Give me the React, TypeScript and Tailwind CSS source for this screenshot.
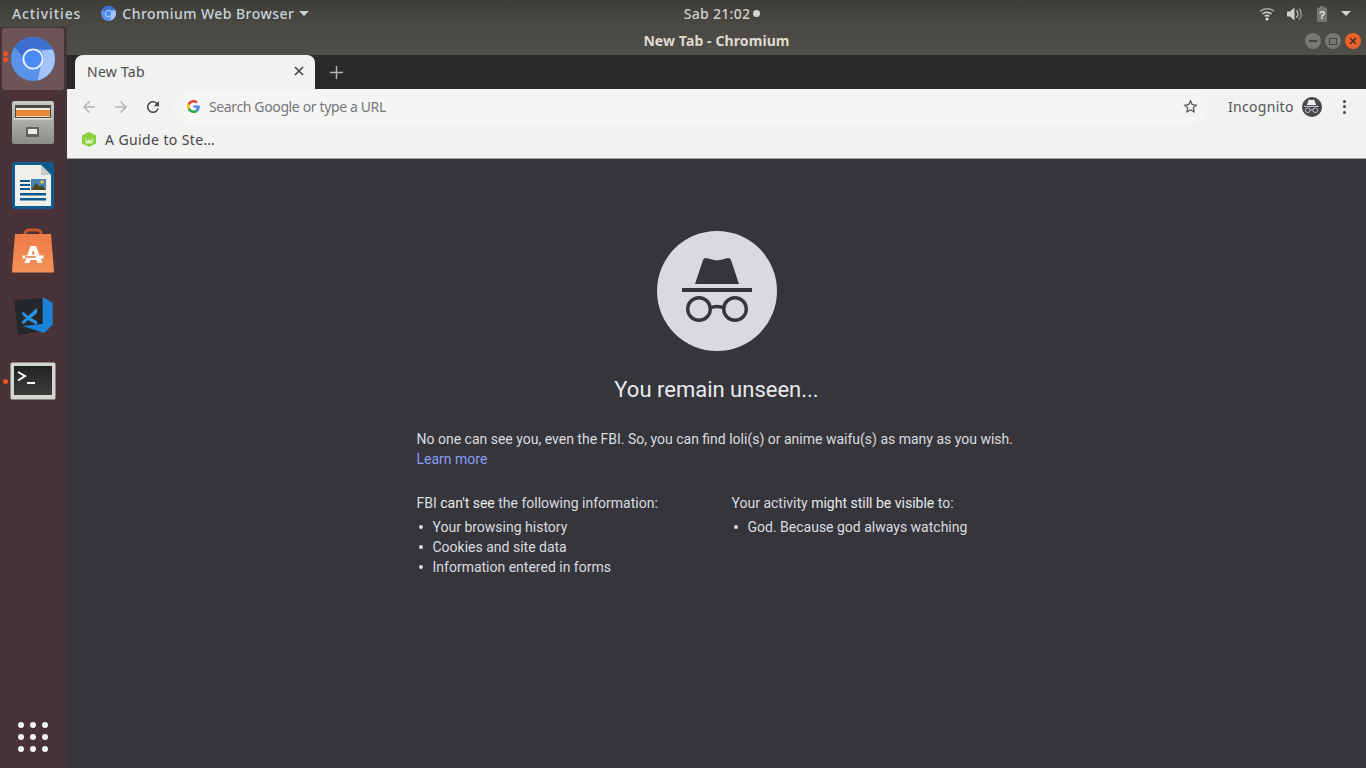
import React from "react";

const ChromiumLogo = ({ s }: { s: number }) => (
  <svg width={s} height={s} viewBox="0 0 48 48">
    <circle cx="24" cy="24" r="24" fill="#5a92ea" />
    <path d="M4 11A24 24 0 0 1 45.500 13.500L24 13A11 11 0 0 0 13 22Z" fill="#3c6fd0" />
    <path d="M45.500 13.500A24 24 0 0 1 29 47.500L33 30A11 11 0 0 0 33 15Z" fill="#a3c4fa" />
    <circle cx="24" cy="24" r="10.500" fill="#4a8cf2" stroke="#f2f6fd" strokeWidth="2" />
  </svg>
);

const SpyIcon = ({ s, c }: { s: number; c: string }) => (
  <svg width={s} height={s} viewBox="0 0 72 72" fill="none">
    <path d="M14 29 L22 5 Q23 2.500 26 3.200 L32 4.800 Q36 5.800 40 4.800 L46 3.200 Q49 2.500 50 5 L58 29 Z" fill={c} />
    <rect x="1" y="33" width="70" height="4" fill={c} />
    <circle cx="18" cy="54" r="11.300" stroke={c} strokeWidth="3.400" />
    <circle cx="54" cy="54" r="11.300" stroke={c} strokeWidth="3.400" />
    <path d="M29 53 Q36 50 43 53" stroke={c} strokeWidth="3.400" />
  </svg>
);

const Files = () => (
  <svg width="44" height="46" viewBox="0 0 44 46">
    <defs>
      <linearGradient id="fg" x1="0" y1="0" x2="0" y2="1">
        <stop offset="0" stopColor="#c9c9c5" />
        <stop offset="1" stopColor="#8c8c88" />
      </linearGradient>
    </defs>
    <rect x="1" y="2" width="42" height="43" rx="2.500" fill="url(#fg)" />
    <rect x="4" y="6" width="36" height="13" fill="#4c4844" />
    <rect x="5" y="9" width="34" height="2" fill="#f4efe2" />
    <rect x="5" y="11" width="34" height="6" fill="#e8873a" />
    <rect x="5" y="17" width="34" height="1" fill="#f4d9a8" />
    <rect x="3" y="19" width="38" height="1.500" fill="#e4e4e0" />
    <rect x="15" y="28" width="13" height="10" rx="1" fill="#5f5f5c" />
    <rect x="17" y="30" width="9" height="5" fill="#ecece8" />
  </svg>
);

const Writer = () => (
  <svg width="42" height="48" viewBox="0 0 42 48">
    <path d="M3 0h36a3 3 0 0 1 3 3v41a3 3 0 0 1-3 3H3a3 3 0 0 1-3-3V3a3 3 0 0 1 3-3z" fill="#0d5b8f" />
    <path d="M3 3h26l10 10v31H3z" fill="#efefeb" />
    <path d="M29 3v10h10z" fill="#c9c9c5" />
    <rect x="8" y="18" width="10" height="2" fill="#0f5a8c" />
    <rect x="8" y="22" width="10" height="2" fill="#0f5a8c" />
    <rect x="8" y="26" width="10" height="2" fill="#0f5a8c" />
    <rect x="8" y="31" width="26" height="2.500" fill="#0f5a8c" />
    <rect x="8" y="36" width="26" height="2.500" fill="#0f5a8c" />
    <rect x="19" y="17" width="15" height="11" fill="#4a86b4" />
    <path d="M19 28l5-7 4 4 2-2 4 5z" fill="#4c4526" />
    <circle cx="30" cy="20" r="1.800" fill="#f0c040" />
  </svg>
);

const Store = () => (
  <svg width="42" height="45" viewBox="0 0 42 45">
    <defs>
      <linearGradient id="sg" x1="0" y1="0" x2="0" y2="1">
        <stop offset="0" stopColor="#ee7c45" />
        <stop offset="1" stopColor="#f59058" />
      </linearGradient>
    </defs>
    <path d="M13 12V6a4 4 0 0 1 4-4h8a4 4 0 0 1 4 4v6" fill="none" stroke="#c9552a" strokeWidth="3" />
    <path d="M3 6h36l3 37a1.500 1.500 0 0 1-1.500 1.500H1.500A1.500 1.500 0 0 1 0 43z" fill="url(#sg)" />
    <path d="M18.500 18h5.500l6.500 17h-5l-1-3h-6l-1 3h-5zM21.200 22l-1.700 4.500h3.400z" fill="#fff" />
    <rect x="10.500" y="27.500" width="21" height="3" fill="#fff" />
    <rect x="13" y="28.300" width="11" height="1.400" fill="#e0703c" />
  </svg>
);

const VSCode = () => (
  <svg width="39" height="42" viewBox="0 0 39 42">
    <path d="M0 3 L29 1 L31 34 L4 38 Z" fill="#24282d" />
    <path d="M28.700 0 L38.700 6 L38.700 27.700 L30 36 L8.700 29 L28.700 27 Z" fill="#1b84d8" />
    <path d="M23 11 L14 19 L9.500 15 L7.500 16.500 L12 21 L7.500 25 L9.500 27 L14 23 L23 28 Z M23 16 V24 L17 21 Z" fill="#2a93e6" fillRule="evenodd" />
  </svg>
);

const Terminal = () => (
  <svg width="46" height="38" viewBox="0 0 46 38">
    <defs>
      <linearGradient id="tg" x1="0" y1="0" x2="0" y2="1">
        <stop offset="0" stopColor="#222" />
        <stop offset="1" stopColor="#3c3c3c" />
      </linearGradient>
    </defs>
    <rect x="0.500" y="0.500" width="45" height="37" rx="1.500" fill="#d4d4d0" />
    <rect x="4" y="4" width="38" height="29" fill="url(#tg)" />
    <path d="M8 10l7 4-7 4.500" fill="none" stroke="#fff" strokeWidth="2" />
    <rect x="17" y="20" width="8" height="2" fill="#fff" />
  </svg>
);

const GoogleG = () => (
  <svg width="13" height="13" viewBox="0 0 48 48">
    <path fill="#EA4335" d="M24 9.500c3.500 0 6.700 1.300 9.100 3.500l6.800-6.800C35.800 2.400 30.300 0 24 0 14.600 0 6.500 5.400 2.600 13.200l7.900 6.100C12.400 13.700 17.700 9.500 24 9.500z" />
    <path fill="#4285F4" d="M47 24.500c0-1.600-.2-3.100-.4-4.500H24v9h13c-.6 3-2.200 5.500-4.700 7.200l7.600 5.900C44.300 37.900 47 31.800 47 24.500z" />
    <path fill="#FBBC05" d="M10.500 28.700C10 27.200 9.700 25.600 9.700 24s.3-3.200.8-4.700l-7.900-6.100C.9 16.500 0 20.100 0 24s.9 7.500 2.600 10.800z" />
    <path fill="#34A853" d="M24 48c6.500 0 11.900-2.100 15.900-5.900l-7.600-5.900c-2.200 1.500-5 2.300-8.300 2.300-6.300 0-11.600-4.200-13.500-9.900l-7.900 6.100C6.500 42.600 14.600 48 24 48z" />
  </svg>
);

const Nav = ({ d, c }: { d: string; c: string }) => (
  <svg width="18" height="18" viewBox="0 0 24 24" fill={c}>
    <path d={d} />
  </svg>
);

const dots = Array.from({ length: 9 });

const ubuntu = "font-['Noto_Sans','Liberation_Sans',sans-serif]";

export default function App() {
  return (
    <div className="h-screen w-[1366px] overflow-hidden flex flex-col bg-[#36353b] font-['Roboto',sans-serif]">
      {/* top panel */}
      <div className={`h-[27px] shrink-0 bg-gradient-to-b from-[#3e3d38] to-[#4a4943] grid grid-cols-[1fr_auto_1fr] items-center text-[14px] font-medium text-[#c9d3da] ${ubuntu}`}>
        <div className="flex items-center">
          <span className="ml-3 tracking-[0.9px]">Activities</span>
          <span className="ml-[20px]"><ChromiumLogo s={15} /></span>
          <span className="ml-[6px] tracking-[0.45px]">Chromium Web Browser</span>
          <span className="ml-[5px] w-0 h-0 border-x-[5px] border-x-transparent border-t-[5px] border-t-[#c9d3da]" />
        </div>
        <div className="ml-[78px] flex items-center gap-[3px] text-[#d0d0cc]">
          <span className="tracking-[0.3px]">Sab 21:02</span>
          <span className="w-[7px] h-[7px] rounded-full bg-[#d5d5d0]" />
        </div>
        <div className="flex items-center justify-end text-[#c4c4bf]">
          <svg width="16" height="14" viewBox="0 0 16 14" className="mr-[12px]" fill="none" stroke="#d0d0cc" strokeWidth="1.500">
            <path d="M1 4.500a10 10 0 0 1 14 0" opacity="0.7" />
            <path d="M3.500 7a6.500 6.500 0 0 1 9 0" />
            <path d="M5.800 9.400a3.200 3.200 0 0 1 4.400 0" />
            <circle cx="8" cy="12" r="1.500" fill="#e0e0dc" stroke="none" />
          </svg>
          <svg width="16" height="14" viewBox="0 0 16 14" className="mr-[13px]">
            <path d="M0 4.500h3l4.500-4v13l-4.500-4H0z" fill="#d0d0cc" />
            <path d="M9.500 3.500a5 5 0 0 1 0 7" fill="none" stroke="#d0d0cc" strokeWidth="1.300" />
            <path d="M12 1.500a8 8 0 0 1 0 11" fill="none" stroke="#9a9a95" strokeWidth="1.300" />
          </svg>
          <svg width="12" height="16" viewBox="0 0 12 16" className="mr-[13px]">
            <path d="M4 0h4v1.500h3V16H1V1.500h3z" fill="#777772" />
            <text x="6" y="13" textAnchor="middle" fontSize="11" fontWeight="700" fill="#e4e4e0" fontFamily="Liberation Sans, sans-serif">?</text>
          </svg>
          <span className="mr-[15px] w-0 h-0 border-x-[5px] border-x-transparent border-t-[5px] border-t-[#d0d0cc]" />
        </div>
      </div>

      <div className="flex-1 min-h-0 flex">
        {/* dock */}
        <div className="w-[67px] shrink-0 bg-[#4a3338] border-r border-[#3d3a3e] flex flex-col items-center relative">
          <div className="absolute left-[3px] top-[24px] flex flex-col gap-[1px]">
            <span className="w-[5px] h-[5px] rounded-full bg-[#e9541f]" />
            <span className="w-[5px] h-[5px] rounded-full bg-[#e9541f]" />
          </div>
          <div className="mt-[1px] w-[62px] h-[62px] rounded-[3px] bg-[#6d5458] flex items-center justify-center">
            <ChromiumLogo s={44} />
          </div>
          <div className="mt-[7px] h-[50px] flex items-center justify-center"><Files /></div>
          <div className="mt-[14px] h-[50px] flex items-center justify-center"><Writer /></div>
          <div className="mt-[14px] h-[50px] flex items-center justify-center"><Store /></div>
          <div className="mt-[18px] h-[50px] flex items-center justify-center"><VSCode /></div>
          <div className="mt-[13px] h-[50px] flex items-center justify-center relative w-full">
            <span className="absolute left-[3px] top-[23px] w-[5px] h-[5px] rounded-full bg-[#e9541f]" />
            <Terminal />
          </div>
          <div className="mt-auto mb-[16px] grid grid-cols-3 gap-x-[6px] gap-y-[6px]">
            {dots.map((_, i) => (
              <span key={i} className="w-[6px] h-[6px] rounded-full bg-[#f4f4f2]" />
            ))}
          </div>
        </div>

        {/* window */}
        <div className="flex-1 min-w-0 flex flex-col">
          <div className={`h-[28px] shrink-0 pb-[2px] bg-gradient-to-b from-[#4a4943] to-[#4f4e48] relative flex items-center justify-center text-[14px] font-bold text-[#dfdbd2] ${ubuntu}`}>
            <span className="tracking-[0.1px]">New Tab - Chromium</span>
            <div className="absolute right-[5px] top-[6px] flex gap-[4px]">
              <span className="w-4 h-4 rounded-full bg-[#787873] flex items-center justify-center">
                <span className="w-[8px] h-[1.500px] bg-[#45443f]" />
              </span>
              <span className="w-4 h-4 rounded-full bg-[#787873] flex items-center justify-center">
                <span className="w-[8px] h-[7px] border border-[#45443f]" />
              </span>
              <span className="w-4 h-4 rounded-full bg-[#e9622b] flex items-center justify-center">
                <svg width="8" height="8" viewBox="0 0 8 8" stroke="#3a2a20" strokeWidth="1.400"><path d="M1 1l6 6M7 1L1 7" /></svg>
              </span>
            </div>
          </div>

          <div className="h-[34px] shrink-0 bg-[#2b2a28] flex items-end pl-[8px]">
            <div className={`w-[240px] h-[34px] pb-[2px] bg-[#f2f2f0] rounded-t-[8px] flex items-center pl-[12px] pr-[11px] text-[14px] text-[#4b4b4b] ${ubuntu}`}>
              <span className="tracking-[0.25px]">New Tab</span>
              <svg className="ml-auto" width="10" height="10" viewBox="0 0 10 10" stroke="#3c3c3c" strokeWidth="1.500"><path d="M1 1l8 8M9 1L1 9" /></svg>
            </div>
            <svg className="ml-[15px] mb-[10px]" width="13" height="13" viewBox="0 0 13 13" stroke="#b8b8b5" strokeWidth="1.400"><path d="M6.500 0v13M0 6.500h13" /></svg>
          </div>

          <div className="h-[35px] shrink-0 bg-[#f2f2f0] flex items-center pl-[13px]">
            <Nav c="#b4b4b2" d="M20 11H7.830l5.590-5.590L12 4l-8 8 8 8 1.410-1.410L7.830 13H20v-2z" />
            <span className="ml-[14px]"><Nav c="#b4b4b2" d="M12 4l-1.410 1.410L16.170 11H4v2h12.170l-5.580 5.590L12 20l8-8z" /></span>
            <span className="ml-[14px]"><Nav c="#454545" d="M17.650 6.350A7.958 7.958 0 0 0 12 4c-4.420 0-7.990 3.580-7.990 8s3.570 8 7.990 8c3.730 0 6.840-2.550 7.730-6h-2.080A5.990 5.990 0 0 1 12 18c-3.310 0-6-2.690-6-6s2.690-6 6-6c1.660 0 3.140.69 4.220 1.780L13 11h7V4l-2.350 2.350z" /></span>
            <div className={`ml-[12px] w-[1034px] h-[33px] rounded-[16px] bg-[#f5f5f3] flex items-center pl-[13px] pr-[10px] text-[14px] text-[#75757a] ${ubuntu}`}>
              <GoogleG />
              <span className="ml-[9px] tracking-[-0.37px]">Search Google or type a URL</span>
              <svg className="ml-auto" width="15" height="15" viewBox="0 0 24 24" fill="none" stroke="#55555a" strokeWidth="2"><path d="M12 3l2.800 6 6.400.8-4.700 4.400 1.300 6.400L12 17.400l-5.800 3.200 1.300-6.400L2.800 9.800 9.200 9z" /></svg>
            </div>
            <span className={`ml-[20px] text-[14px] text-[#55555a] tracking-[0.3px] ${ubuntu}`}>Incognito</span>
            <span className="ml-[8px] w-5 h-5 rounded-full bg-[#46464b] flex items-center justify-center">
              <SpyIcon s={15} c="#eeeeee" />
            </span>
            <span className="ml-[21px] flex flex-col gap-[2.500px]">
              <span className="w-[3px] h-[3px] rounded-full bg-[#45454a]" />
              <span className="w-[3px] h-[3px] rounded-full bg-[#45454a]" />
              <span className="w-[3px] h-[3px] rounded-full bg-[#45454a]" />
            </span>
          </div>

          <div className={`h-[35px] shrink-0 pb-[3px] bg-[#f2f2f0] border-b border-[#a5a5a3] flex items-center pl-[15px] text-[14px] text-[#45454a] ${ubuntu}`}>
            <svg width="14" height="15" viewBox="0 0 14 15">
              <path d="M7 0l7 3.500v8L7 15l-7-3.500v-8z" fill="#86d13c" />
              <path d="M3.500 4.500l1.800 5 1.700-2.500 1.700 2.500 1.800-5v7h-7z" fill="#e6f8d0" opacity="0.9" />
            </svg>
            <span className="ml-[9px] tracking-[0.4px]">A Guide to Ste…</span>
          </div>

          {/* content */}
          <div className="flex-1 min-h-0 flex flex-col items-center bg-[#36353b] text-[14px] leading-[20px] text-[#dadce0]">
            <div className="mt-[72px] w-[120px] h-[120px] rounded-full bg-[#d9dade] flex items-center justify-center">
              <SpyIcon s={72} c="#36353b" />
            </div>
            <h1 className="mt-[24px] text-[22px] leading-[30px] font-normal text-[#e8eaed]">You remain unseen...</h1>
            <div className="mt-[24px] w-[600px]">
              <p>No one can see you, even the FBI. So, you can find loli(s) or anime waifu(s) as many as you wish.</p>
              <p className="text-[#8a9cf8]">Learn more</p>
              <div className="mt-[24px] flex">
                <div className="w-[315px]">
                  <p>FBI <span className="text-[#e8eaed]">can't see</span> the following information:</p>
                  <ul className="mt-[4px]">
                    {["Your browsing history", "Cookies and site data", "Information entered in forms"].map((t) => (
                      <li key={t} className="flex items-center">
                        <span className="ml-[2px] mr-[10px] w-[4px] h-[4px] rounded-full bg-[#dadce0]" />
                        {t}
                      </li>
                    ))}
                  </ul>
                </div>
                <div>
                  <p>Your activity <span className="text-[#e8eaed]">might still be visible</span> to:</p>
                  <ul className="mt-[4px]">
                    <li className="flex items-center">
                      <span className="ml-[2px] mr-[10px] w-[4px] h-[4px] rounded-full bg-[#dadce0]" />
                      God. Because god always watching
                    </li>
                  </ul>
                </div>
              </div>
            </div>
          </div>
        </div>
      </div>
    </div>
  );
}
